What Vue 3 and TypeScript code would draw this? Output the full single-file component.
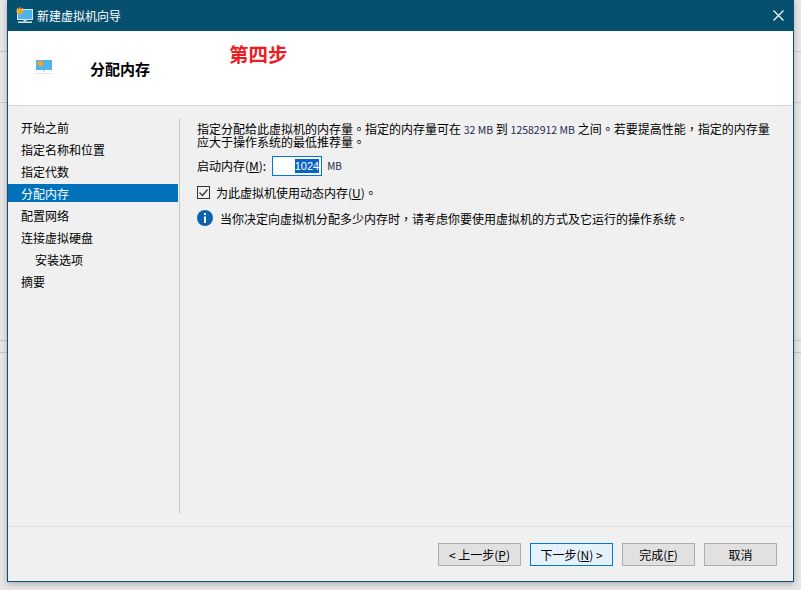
<script setup lang="ts">
const steps = [
  { label: '开始之前' },
  { label: '指定名称和位置' },
  { label: '指定代数' },
  { label: '分配内存', active: true },
  { label: '配置网络' },
  { label: '连接虚拟硬盘' },
  { label: '安装选项', sub: true },
  { label: '摘要' },
]
const sunRays = [0, 45, 90, 135]
</script>

<template>
  <div class="desk">
    <div class="window">
      <div class="titlebar">
        <svg class="title-icon" width="18" height="16" viewBox="0 0 18 16">
          <rect x="2.500" y="2.500" width="15" height="10" fill="#4fb3ee" stroke="#d5e6f0" stroke-width="1" />
          <g v-for="r in sunRays" :key="r" :transform="`rotate(${r} 5 4)`">
            <rect x="1" y="3.500" width="8" height="1" fill="#f4a71e" />
          </g>
          <circle cx="5" cy="4" r="2.600" fill="#f4a71e" />
          <rect x="8.500" y="13" width="3" height="1.500" fill="#c9dbe6" />
          <rect x="3" y="14.500" width="14" height="1.500" fill="#d5e0e6" />
        </svg>
        <span class="title-text">新建虚拟机向导</span>
        <svg class="close" width="11" height="11" viewBox="0 0 11 11">
          <path d="M.5.5l10 10M10.500.5l-10 10" stroke="#fff" stroke-width="1.200" fill="none" />
        </svg>
      </div>
      <header class="banner">
        <svg class="banner-icon" width="16" height="15" viewBox="0 0 16 15">
          <rect x="0" y="0" width="16" height="10" fill="#4fb3ee" />
          <g v-for="r in sunRays" :key="r" :transform="`rotate(${r} 4.500 3.500)`">
            <rect x="1" y="3" width="7" height="1" fill="#f4a71e" />
          </g>
          <circle cx="4.500" cy="3.500" r="2.400" fill="#f4a71e" />
          <rect x="7" y="10" width="2" height="2" fill="#d6e4ec" />
          <rect x="0" y="13" width="16" height="1" fill="#dfe8ee" />
        </svg>
        <h1 class="banner-title">分配内存</h1>
        <span class="note">第四步</span>
      </header>
      <div class="body">
        <nav class="nav">
          <div
            v-for="s in steps"
            :key="s.label"
            class="nav-item"
            :class="{ active: s.active, sub: s.sub }"
          >{{ s.label }}</div>
        </nav>
        <main class="content">
          <p class="desc">
            <span class="line">指定分配给此虚拟机的内存量<span class="tc">。</span>指定的内存量可在 <span class="num">32 MB</span> 到 <span class="num">12582912 MB</span> 之间<span class="tc">。</span>若要提高性能<span class="tc">，</span>指定的内存量</span>
            <span class="line">应大于操作系统的最低推荐量<span class="tc">。</span></span>
          </p>
          <div class="mem-row">
            <span>启动内存(<u>M</u>):</span>
            <div class="mem-input"><span class="sel">1024</span></div>
            <span class="unit">MB</span>
          </div>
          <label class="check-row">
            <svg width="13" height="13" viewBox="0 0 13 13">
              <rect x=".5" y=".5" width="12" height="12" fill="#f0f0f0" stroke="#333" />
              <path d="M2.500 6.500l3 3 5-6" fill="none" stroke="#333" stroke-width="1.200" />
            </svg>
            <span>为此虚拟机使用动态内存(<u>U</u>)<span class="tc">。</span></span>
          </label>
          <div class="info-row">
            <svg width="16" height="16" viewBox="0 0 16 16">
              <circle cx="8" cy="8" r="8" fill="#0a64ad" />
              <rect x="7" y="3" width="2" height="2" fill="#fff" />
              <rect x="7" y="6.500" width="2" height="6.500" fill="#fff" />
            </svg>
            <span>当你决定向虚拟机分配多少内存时<span class="tc">，</span>请考虑你要使用虚拟机的方式及它运行的操作系统<span class="tc">。</span></span>
          </div>
        </main>
      </div>
      <footer class="footer">
        <button class="btn">&lt; 上一步(<u>P</u>)</button>
        <button class="btn primary">下一步(<u>N</u>) &gt;</button>
        <button class="btn small">完成(<u>F</u>)</button>
        <button class="btn small">取消</button>
      </footer>
    </div>
  </div>
</template>

<style scoped>
.desk {
  width: 801px;
  height: 590px;
  overflow: hidden;
  background:
    linear-gradient(#c6c6c6, #c6c6c6) 0 340px / 801px 1px no-repeat,
    linear-gradient(#c6c6c6, #c6c6c6) 0 352px / 801px 1px no-repeat,
    linear-gradient(#c6c6c6, #c6c6c6) 0 51px / 801px 1px no-repeat,
    linear-gradient(#c6c6c6, #c6c6c6) 0 102px / 801px 1px no-repeat,
    #e6e6e6;
  font-family: "Noto Sans CJK SC", "Liberation Sans", sans-serif;
  font-size: 12px;
  color: #000;
}
.window {
  box-sizing: border-box;
  width: 787px;
  height: 582px;
  margin-left: 7px;
  border: 1px solid #0a5170;
  border-top: 0;
  background: #f0f0f0;
  display: flex;
  flex-direction: column;
  box-shadow: 0 2px 6px rgba(0, 0, 0, 0.25);
}
.titlebar {
  height: 31px;
  flex: none;
  background: #06506f;
  display: flex;
  align-items: center;
  color: #fff;
  padding-left: 7px;
  padding-right: 9px;
}
.title-icon { flex: none; margin-right: 3px; margin-top: -1px; }
.title-text { flex: 1; font-size: 12px; margin-left: 1px; }
.close { flex: none; }
.banner {
  position: relative;
  height: 75px;
  flex: none;
  box-sizing: border-box;
  background: #fff;
  border-bottom: 1px solid #d8d8d8;
  display: flex;
  align-items: flex-start;
}
.banner-icon { margin: 29px 0 0 28px; flex: none; }
.banner-title {
  margin: 28px 0 0 38px;
  font-size: 15px;
  line-height: 20px;
  font-weight: 700;
}
.note {
  position: absolute;
  left: 221px;
  top: 11px;
  color: #f01c24;
  font-size: 19.500px;
  line-height: 24px;
  font-weight: 700;
}
.body {
  flex: 1;
  display: flex;
  min-height: 0;
  padding-top: 12px;
}
.nav {
  width: 171px;
  height: 396px;
  flex: none;
  box-sizing: content-box;
  border-right: 1px solid #c8c8c8;
}
.nav-item {
  height: 18px;
  line-height: 20px;
  overflow: hidden;
  margin-bottom: 4px;
  margin-right: 1px;
  padding-left: 13px;
  white-space: nowrap;
}
.nav-item.sub { padding-left: 27px; }
.nav-item.active { background: #0072bc; color: #fff; }
.content { flex: 1; padding: 4px 20px 0 17px; min-width: 0; }
.desc { margin: 0; }
.line { display: block; height: 13px; line-height: 13px; white-space: nowrap; }
.num { font-size: 10.500px; line-height: 1; color: #1f2a55; }
.tc { font-family: "Noto Sans CJK TC", sans-serif; line-height: 1; }
.mem-row {
  display: flex;
  align-items: center;
  margin-top: 7px;
  height: 21px;
}
.mem-input {
  box-sizing: border-box;
  width: 50px;
  height: 20px;
  margin-left: 6px;
  border: 1px solid #0078d7;
  background: #fff;
  display: flex;
  justify-content: flex-end;
  align-items: center;
  padding-right: 2px;
}
.sel { background: #0a64c8; color: #fff; font-size: 11px; line-height: 14px; font-family: "Liberation Sans", sans-serif; }
.unit { margin-left: 5px; font-size: 10px; color: #1f2a55; }
.check-row {
  display: flex;
  align-items: center;
  gap: 6px;
  margin-top: 9px;
  height: 14px;
}
.info-row {
  display: flex;
  align-items: center;
  gap: 7px;
  margin-top: 11px;
  height: 16px;
}
.footer {
  flex: none;
  height: 55px;
  box-sizing: border-box;
  border-top: 1px solid #e0e0e0;
  display: flex;
  justify-content: flex-end;
  align-items: flex-start;
  gap: 9px;
  padding: 16px 16px 0 0;
}
.btn {
  width: 83px;
  height: 23px;
  box-sizing: border-box;
  padding: 0;
  border: 1px solid #adadad;
  background: #e1e1e1;
  font: inherit;
  color: #000;
  line-height: 20px;
}
.btn.small { width: 73px; }
.btn.primary { background: #e5f1fb; border-color: #0078d7; }
</style>
